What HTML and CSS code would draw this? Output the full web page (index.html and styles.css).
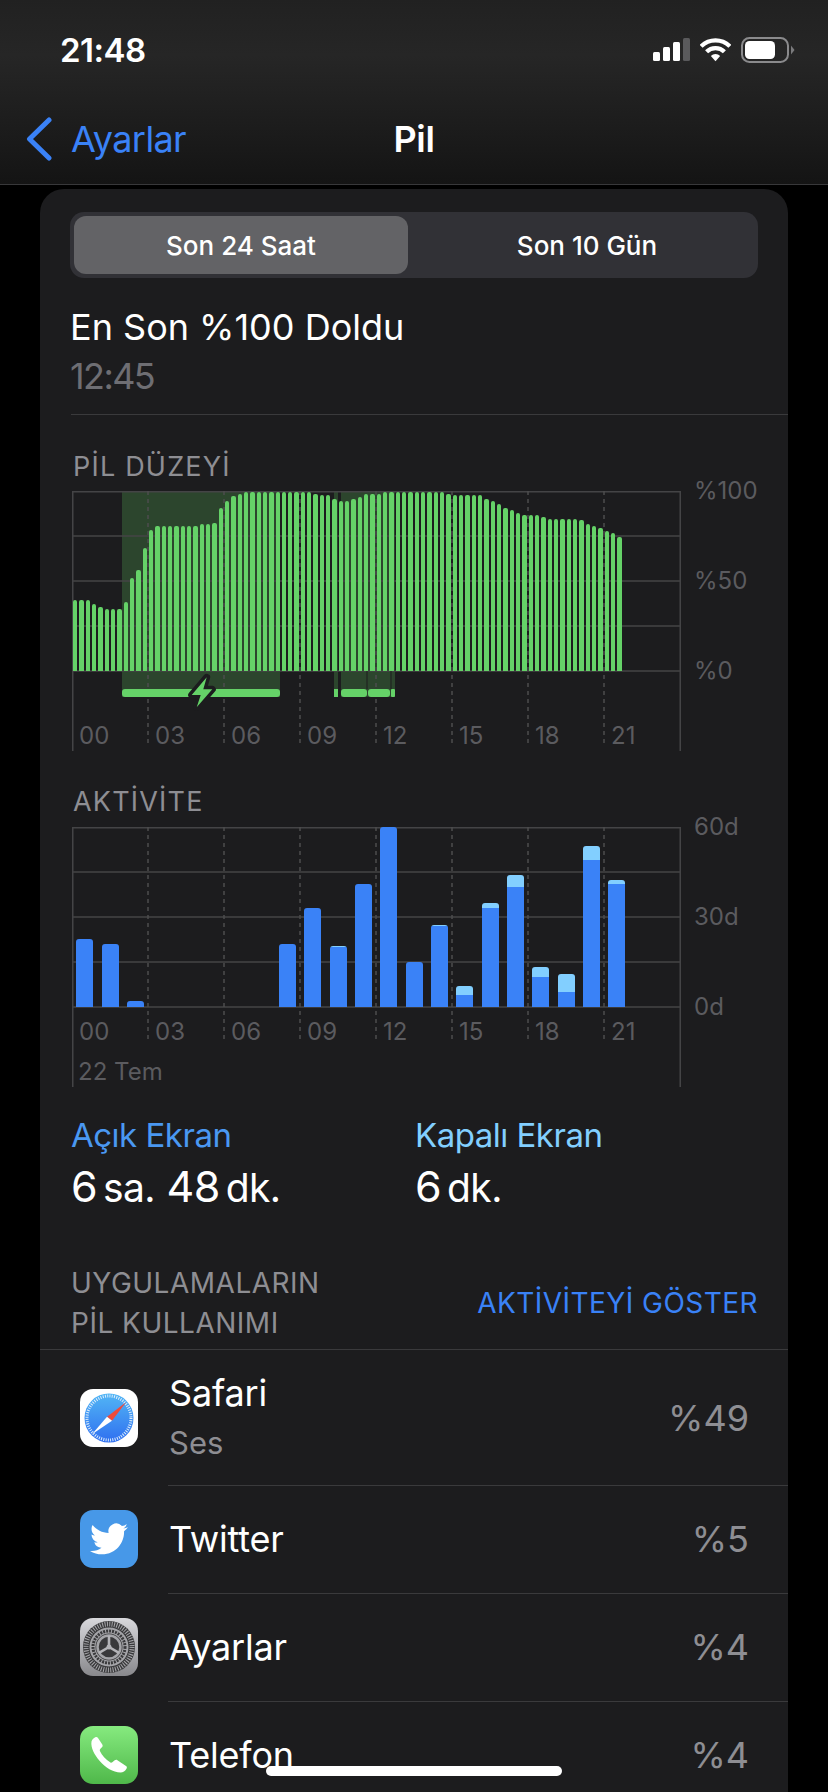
FILE: index.html
```html
<!DOCTYPE html>
<html lang="tr">

<head>
    <meta charset="UTF-8">
    <title>Pil</title>
    <link rel="stylesheet" href="styles.css">
</head>

<body>
    <div class="screen">

        <header class="top">
            <div class="status">
                <span class="time">21:48</span>
                <div class="status-icons">
                    <svg width="37" height="24" viewBox="0 0 37 24">
                        <rect x="0" y="14" width="7" height="9" rx="1.5" fill="#fff" />
                        <rect x="10" y="9" width="7" height="14" rx="1.5" fill="#fff" />
                        <rect x="20" y="4" width="7" height="19" rx="1.5" fill="#fff" />
                        <rect x="30" y="0" width="7" height="23" rx="1.5" fill="#5a5a5c" />
                    </svg>
                    <svg width="31" height="24" viewBox="0 0 32 24" fill="none" stroke="#fff" stroke-width="4.4">
                        <path d="M1.15 8.15A21 21 0 0 1 30.85 8.15" />
                        <path d="M6.8 13.8A13 13 0 0 1 25.2 13.8" />
                        <path d="M16 23.5L11.2 18.2A6.8 6.8 0 0 1 20.8 18.2Z" fill="#fff" stroke="none" />
                    </svg>
                    <svg width="54" height="26" viewBox="0 0 54 26">
                        <rect x="1" y="1" width="46" height="24" rx="7.5" fill="none" stroke="#8a8a8c" stroke-width="2" />
                        <rect x="4" y="4" width="30" height="18" rx="4.5" fill="#fff" />
                        <path d="M50 8.500l3.500 4.500l-3.500 4.500z" fill="#7a7a7c" />
                    </svg>
                </div>
            </div>
            <nav class="nav">
                <a class="back">
                    <svg width="26" height="44" viewBox="0 0 26 44" fill="none" stroke="#3a82f7" stroke-width="5" stroke-linecap="round" stroke-linejoin="round">
                        <path d="M23 3L3.500 22L23 41" />
                    </svg>
                    <span>Ayarlar</span>
                </a>
                <span class="nav-title">Pil</span>
            </nav>
        </header>

        <main class="card">

            <div class="seg">
                <div class="seg-item seg-on">Son 24 Saat</div>
                <div class="seg-item seg-off">Son 10 Gün</div>
            </div>

            <div class="last">
                <div class="last-title">En Son %100 Doldu</div>
                <div class="last-time">12:45</div>
            </div>

            <!-- Pil düzeyi -->
            <h3 class="chart-title">PİL DÜZEYİ</h3>
            <div class="chart-row">
                <div class="chart">
                    <svg class="grid" width="609" height="260" viewBox="0 0 609 260">
                        <rect x="50" y="0" width="158" height="206" fill="#2c452d" />
                        <rect x="262" y="0" width="4" height="206" fill="#2c452d" />
                        <rect x="269" y="0" width="54" height="206" fill="#2c452d" />
                        <path class="line" d="M.75 0V260M608.250 0V260M0 .75H609M0 45H609M0 90H609M0 135H609M0 180H609" />
                        <path class="dash" d="M76 0V255M152 0V255M228 0V255M304 0V255M380 0V255M456 0V255M532 0V255" />
                        <path class="thin" d="M295 180V198M319 180V198" />
                        <rect class="charge" x="50" y="198" width="158" height="8" rx="3" />
                        <rect class="charge" x="262" y="198" width="4" height="8" />
                        <rect class="charge" x="269" y="198" width="26" height="8" rx="3" />
                        <rect class="charge" x="296" y="198" width="22" height="8" rx="3" />
                        <rect class="charge" x="319" y="198" width="4" height="8" rx="1" />
                        <path class="bolt" d="M134.700 186.300L119.700 204H128.700L124.700 216.300L140.300 198.300H131.300Z" />
                    </svg>
                    <div class="plot plot-level">
                        <i style="height:70.7px"></i><i style="height:71.3px"></i><i style="height:71.3px"></i><i style="height:67.3px"></i><i style="height:64px"></i><i style="height:62.3px"></i><i style="height:62px"></i><i style="height:62px"></i><i style="height:69.3px"></i><i style="height:92.7px"></i><i style="height:101.3px"></i><i style="height:123.3px"></i><i style="height:141.3px"></i><i style="height:144.7px"></i>
                        <i style="height:145px"></i><i style="height:145px"></i><i style="height:145px"></i><i style="height:145px"></i><i style="height:145px"></i><i style="height:145px"></i><i style="height:146.7px"></i><i style="height:146.7px"></i><i style="height:148.3px"></i><i style="height:163px"></i><i style="height:170px"></i><i style="height:175.3px"></i><i style="height:177.3px"></i>
                        <i style="height:179px"></i><i style="height:179px"></i><i style="height:179px"></i><i style="height:179px"></i><i style="height:179px"></i><i style="height:179px"></i><i style="height:179px"></i><i style="height:179px"></i><i style="height:179px"></i><i style="height:179px"></i><i style="height:179px"></i>
                        <i style="height:177.3px"></i><i style="height:175.7px"></i><i style="height:175.7px"></i><i style="height:172px"></i><i style="height:170.3px"></i><i style="height:170.3px"></i><i style="height:172px"></i><i style="height:173.7px"></i><i style="height:177.3px"></i><i style="height:177.3px"></i><i style="height:177.3px"></i>
                        <i style="height:179px"></i><i style="height:179px"></i><i style="height:179px"></i><i style="height:179px"></i><i style="height:179px"></i><i style="height:179px"></i><i style="height:179px"></i><i style="height:179px"></i><i style="height:179px"></i><i style="height:179px"></i>
                        <i style="height:177.3px"></i><i style="height:175.7px"></i><i style="height:175.7px"></i><i style="height:175.7px"></i><i style="height:175.7px"></i><i style="height:175.7px"></i><i style="height:172px"></i><i style="height:170.3px"></i><i style="height:166.7px"></i><i style="height:163px"></i><i style="height:161.3px"></i><i style="height:157.7px"></i>
                        <i style="height:155.7px"></i><i style="height:155.7px"></i><i style="height:155.7px"></i><i style="height:154px"></i><i style="height:152.3px"></i><i style="height:152.3px"></i><i style="height:152.3px"></i><i style="height:152.3px"></i><i style="height:152.3px"></i><i style="height:150.7px"></i><i style="height:147px"></i><i style="height:145px"></i><i style="height:143.3px"></i><i style="height:139.7px"></i><i style="height:138px"></i><i style="height:134.3px"></i>
                    </div>
                    <div class="hours hours-far">
                        <span>00</span><span>03</span><span>06</span><span>09</span><span>12</span><span>15</span><span>18</span><span>21</span>
                    </div>
                </div>
                <div class="yaxis">
                    <span>%100</span><span>%50</span><span>%0</span>
                </div>
            </div>

            <!-- Aktivite -->
            <h3 class="chart-title chart-title-2">AKTİVİTE</h3>
            <div class="chart-row">
                <div class="chart">
                    <svg class="grid" width="609" height="260" viewBox="0 0 609 260">
                        <path class="line" d="M.75 0V260M608.250 0V260M0 .75H609M0 45H609M0 90H609M0 135H609M0 180H609" />
                        <path class="dash" d="M76 0V216M152 0V216M228 0V216M304 0V216M380 0V216M456 0V216M532 0V216" />
                    </svg>
                    <div class="plot plot-act">
                        <div class="abar"><b style="height:68.3px"></b></div>
                        <div class="abar"><b style="height:62.7px"></b></div>
                        <div class="abar"><b style="height:5.7px"></b></div>
                        <div class="abar"></div>
                        <div class="abar"></div>
                        <div class="abar"></div>
                        <div class="abar"></div>
                        <div class="abar"></div>
                        <div class="abar"><b style="height:62.7px"></b></div>
                        <div class="abar"><b style="height:98.7px"></b></div>
                        <div class="abar"><u style="height:1px"></u><b style="height:59.7px"></b></div>
                        <div class="abar"><b style="height:122.7px"></b></div>
                        <div class="abar"><b style="height:179.7px"></b></div>
                        <div class="abar"><b style="height:44.7px"></b></div>
                        <div class="abar"><u style="height:1px"></u><b style="height:80.7px"></b></div>
                        <div class="abar"><u style="height:9px"></u><b style="height:11.7px"></b></div>
                        <div class="abar"><u style="height:5px"></u><b style="height:98.7px"></b></div>
                        <div class="abar"><u style="height:12px"></u><b style="height:119.7px"></b></div>
                        <div class="abar"><u style="height:10px"></u><b style="height:29.7px"></b></div>
                        <div class="abar"><u style="height:18px"></u><b style="height:14.7px"></b></div>
                        <div class="abar"><u style="height:14px"></u><b style="height:146.7px"></b></div>
                        <div class="abar"><u style="height:4px"></u><b style="height:122.7px"></b></div>
                    </div>
                    <div class="hours">
                        <span>00</span><span>03</span><span>06</span><span>09</span><span>12</span><span>15</span><span>18</span><span>21</span>
                    </div>
                    <div class="day">22 Tem</div>
                </div>
                <div class="yaxis">
                    <span>60d</span><span>30d</span><span>0d</span>
                </div>
            </div>

            <div class="usage">
                <div class="usage-col">
                    <div class="usage-label">Açık Ekran</div>
                    <div class="usage-val">6<small>sa.</small> 48<small>dk.</small></div>
                </div>
                <div class="usage-col">
                    <div class="usage-label usage-label-off">Kapalı Ekran</div>
                    <div class="usage-val">6<small>dk.</small></div>
                </div>
            </div>

            <div class="apps-head">
                <div class="apps-title">UYGULAMALARIN<br>PİL KULLANIMI</div>
                <a class="apps-link">AKTİVİTEYİ GÖSTER</a>
            </div>

            <ul class="apps">
                <li class="app app-first">
                    <svg class="app-icon" width="58" height="58" viewBox="0 0 58 58">
                        <defs>
                            <linearGradient id="safariBg" x1="0" y1="0" x2="0" y2="1">
                                <stop offset="0" stop-color="#52b6f5" />
                                <stop offset="1" stop-color="#2f6ff0" />
                            </linearGradient>
                        </defs>
                        <rect width="58" height="58" rx="13" fill="#fff" />
                        <circle cx="29" cy="29" r="24.500" fill="url(#safariBg)" />
                        <circle cx="29" cy="29" r="22" fill="none" stroke="#dcedfc" stroke-width="3" stroke-dasharray="1 1.300" />
                        <path d="M46 13.300L27 27.700L32 31.700Z" fill="#ef4b3c" />
                        <path d="M12 45.300L27 27.700L32 31.700Z" fill="#fff" />
                    </svg>
                    <div class="app-text">
                        <div class="app-name">Safari</div>
                        <div class="app-sub">Ses</div>
                    </div>
                    <span class="app-pct">%49</span>
                </li>
                <li class="app">
                    <svg class="app-icon" width="58" height="58" viewBox="0 0 58 58">
                        <rect width="58" height="58" rx="13" fill="#4798e8" />
                        <g transform="translate(10 10) scale(1.580)">
                            <path fill="#fff" d="M23.953 4.570a10 10 0 01-2.825.775 4.958 4.958 0 002.163-2.723c-.951.555-2.005.959-3.127 1.184a4.920 4.920 0 00-8.384 4.482C7.690 8.095 4.067 6.130 1.640 3.162a4.822 4.822 0 00-.666 2.475c0 1.710.870 3.213 2.188 4.096a4.904 4.904 0 01-2.228-.616v.060a4.923 4.923 0 003.946 4.827 4.996 4.996 0 01-2.212.085 4.936 4.936 0 004.604 3.417 9.867 9.867 0 01-6.102 2.105c-.390 0-.779-.023-1.170-.067a13.995 13.995 0 007.557 2.209c9.053 0 13.998-7.496 13.998-13.985 0-.210 0-.420-.015-.630A9.935 9.935 0 0024 4.590z" />
                        </g>
                    </svg>
                    <div class="app-text">
                        <div class="app-name">Twitter</div>
                    </div>
                    <span class="app-pct">%5</span>
                </li>
                <li class="app">
                    <svg class="app-icon" width="58" height="58" viewBox="0 0 58 58">
                        <defs>
                            <linearGradient id="gearBg" x1="0" y1="0" x2="0" y2="1">
                                <stop offset="0" stop-color="#d8d8dc" />
                                <stop offset="1" stop-color="#88888c" />
                            </linearGradient>
                        </defs>
                        <rect width="58" height="58" rx="13" fill="url(#gearBg)" />
                        <circle cx="29" cy="29" r="26" fill="#39393b" />
                        <circle cx="29" cy="29" r="23" fill="none" stroke="#a8a8ac" stroke-width="5" stroke-dasharray="1 1.400" />
                        <circle cx="29" cy="29" r="19.500" fill="#a4a4a8" />
                        <circle cx="29" cy="29" r="16" fill="none" stroke="#39393b" stroke-width="3" stroke-dasharray="2 1" />
                        <circle cx="29" cy="29" r="13.500" fill="#39393b" />
                        <circle cx="29" cy="29" r="11.500" fill="none" stroke="#a4a4a8" stroke-width="2.500" />
                        <path d="M29 29V17.500M29 29L19 34.800M29 29L39 34.800" stroke="#b4b4b8" stroke-width="2.600" fill="none" />
                        <circle cx="29" cy="29" r="2.500" fill="#b4b4b8" />
                    </svg>
                    <div class="app-text">
                        <div class="app-name">Ayarlar</div>
                    </div>
                    <span class="app-pct">%4</span>
                </li>
                <li class="app">
                    <svg class="app-icon" width="58" height="58" viewBox="0 0 58 58">
                        <defs>
                            <linearGradient id="phoneBg" x1="0" y1="0" x2="0" y2="1">
                                <stop offset="0" stop-color="#86ea7f" />
                                <stop offset="1" stop-color="#4fb84a" />
                            </linearGradient>
                        </defs>
                        <rect width="58" height="58" rx="13" fill="url(#phoneBg)" />
                        <path fill="#fff" d="M11.500 15.500C12 13.500 14 11.500 15.800 11C16.800 10.800 17.500 11.200 18 12L22.300 18.500C22.900 19.500 22.700 20.500 21.900 21.300L20.200 23C19.700 23.600 19.600 24.300 19.900 25C22 29.500 25.500 33.500 30.500 36.500C31.100 36.800 31.700 36.700 32.300 36.200L34.700 34.300C35.600 33.700 36.500 33.600 37.400 34.200L46 40C47 40.700 47.100 41.500 46.600 42.400C45.300 44.800 43 46.500 40.500 46.500C33 46.500 25.500 41.800 19.500 34.800C14.500 28.800 10.500 21.500 11.500 15.500Z" />
                    </svg>
                    <div class="app-text">
                        <div class="app-name">Telefon</div>
                    </div>
                    <span class="app-pct">%4</span>
                </li>
            </ul>
        </main>

        <div class="home-bar"></div>
    </div>
</body>

</html>
```

FILE: styles.css
```css
* {
    box-sizing: border-box;
}

html,
body {
    margin: 0;
    padding: 0;
    background: #000;
}

body {
    font-family: Inter, "Liberation Sans", sans-serif;
    color: #fff;
}

.screen {
    position: relative;
    width: 828px;
    height: 1792px;
    overflow: hidden;
    background: #000;
}

/* ust kisim */
.top {
    height: 185px;
    background: linear-gradient(#212121, #262626 30%, #1c1c1c 70%, #141414);
    border-bottom: 1px solid #38383a;
}

.status {
    height: 100px;
    padding: 0 33px 0 60px;
    display: flex;
    align-items: center;
    justify-content: space-between;
}

.time {
    font-size: 33px;
    font-weight: 600;
    letter-spacing: -0.5px;
}

.status-icons {
    display: flex;
    align-items: center;
    gap: 10px;
}

.nav {
    height: 78px;
    display: grid;
    grid-template-columns: 1fr auto 1fr;
    align-items: center;
}

.back {
    display: flex;
    align-items: center;
    gap: 19px;
    padding-left: 26px;
    color: #3a82f7;
    font-size: 36px;
    letter-spacing: -0.6px;
}

.nav-title {
    font-size: 36px;
    font-weight: 600;
    letter-spacing: -0.3px;
}

/* карточка */
.card {
    height: 1700px;
    margin: 4px 40px 0;
    padding-top: 23px;
    background: #1c1c1e;
    border-radius: 24px 24px 0 0;
}

.seg {
    height: 66px;
    margin: 0 30px;
    padding: 4px;
    display: flex;
    background: #313136;
    border-radius: 14px;
}

.seg-item {
    width: 334px;
    height: 58px;
    display: flex;
    align-items: center;
    justify-content: center;
    font-size: 26px;
    font-weight: 500;
    border-radius: 12px;
}

.seg-off {
    flex: 1;
    padding-left: 12px;
}

.seg-on {
    background: #636366;
}

.last {
    margin: 27px 0 0 31px;
    padding-bottom: 16px;
    border-bottom: 1px solid #3a3a3c;
}

.last-title,
.last-time {
    margin-left: -1px;
    font-size: 36px;
    line-height: 44px;
}

.last-title {
    margin-bottom: 5px;
}

.last-time {
    color: #6e6e73;
    letter-spacing: -1.6px;
}

.chart-title {
    margin: 37px 0 9px 33px;
    font-size: 27px;
    line-height: 30px;
    font-weight: 400;
    letter-spacing: 1.2px;
    color: #8e8e93;
}

.chart-title-2 {
    margin-top: 36px;
    margin-bottom: 10px;
}

.chart-row {
    display: flex;
    gap: 13px;
    margin-left: 32px;
}

.chart {
    position: relative;
    width: 609px;
    height: 260px;
}

.grid {
    position: absolute;
    top: 0;
    left: 0;
}

.line {
    fill: none;
    stroke: #444446;
    stroke-width: 1.5;
}

.dash {
    fill: none;
    stroke: #4c4c4e;
    stroke-width: 1.5;
    stroke-dasharray: 4 4;
}

.thin {
    fill: none;
    stroke: #1c1c1e;
    stroke-width: 1;
}

.charge {
    fill: #65d268;
}

.bolt {
    fill: #65d268;
    stroke: #1c1c1e;
    stroke-width: 7;
    stroke-linejoin: round;
    paint-order: stroke;
}

.plot {
    position: relative;
    height: 180px;
    display: flex;
    align-items: flex-end;
}

.plot-level {
    gap: 2px;
    padding-left: 1px;
}

.plot-level i {
    display: block;
    width: 4.33px;
    background: #65d268;
    border-radius: 2px 2px 0 0;
}

.plot-act {
    gap: 8.33px;
    padding-left: 4.3px;
}

.abar {
    width: 17px;
    display: flex;
    flex-direction: column;
    border-radius: 3px 3px 0 0;
    overflow: hidden;
}

.abar b {
    display: block;
    background: #3a82f7;
}

.abar u {
    display: block;
    background: #82cfff;
}

.hours {
    position: relative;
    margin-top: 10px;
    display: grid;
    grid-template-columns: repeat(8, 76px);
    font-size: 24px;
    line-height: 30px;
    color: #5b5b5f;
}

.hours span {
    padding-left: 7px;
}

.hours-far {
    margin-top: 50px;
}

.day {
    position: relative;
    margin: 10px 0 0 6px;
    font-size: 24px;
    line-height: 30px;
    color: #5b5b5f;
}

.yaxis {
    height: 206px;
    margin-top: -13px;
    display: flex;
    flex-direction: column;
    justify-content: space-between;
    font-size: 24px;
    line-height: 26px;
    color: #5b5b5f;
}

.usage {
    margin: 28px 0 0 31px;
    display: flex;
}

.usage-col {
    width: 344px;
}

.usage-label {
    font-size: 33px;
    line-height: 40px;
    color: #4a98f2;
    letter-spacing: -0.5px;
}

.usage-label-off {
    color: #82cfff;
}

.usage-val {
    margin-top: 6px;
    margin-bottom: 1px;
    font-size: 43px;
    line-height: 50px;
    letter-spacing: -0.6px;
}

.usage-val small {
    margin-left: 6px;
    font-size: 39px;
}

.apps-head {
    margin: 49px 30px 6px 31px;
    display: flex;
    align-items: center;
    justify-content: space-between;
}

.apps-title {
    font-size: 28px;
    line-height: 40px;
    letter-spacing: 0.5px;
    color: #8e8e93;
}

.apps-link {
    font-size: 28px;
    letter-spacing: 0.45px;
    color: #3a82f7;
}

.apps {
    list-style: none;
    margin: 0;
    padding: 0;
    border-top: 1px solid #3a3a3c;
}

.app {
    position: relative;
    height: 108px;
    padding: 0 39px 0 40px;
    display: flex;
    align-items: center;
}

.app-first {
    height: 135px;
}

.app+.app::before {
    content: "";
    position: absolute;
    top: 0;
    left: 128px;
    right: 0;
    border-top: 1px solid #3a3a3c;
}

.app-icon {
    flex: none;
}

.app-text {
    flex: 1;
    margin-left: 31px;
}

.app-name {
    font-size: 36px;
    line-height: 46px;
    letter-spacing: -0.2px;
}

.app-sub {
    margin-top: 7px;
    margin-bottom: 3px;
    font-size: 31px;
    line-height: 40px;
    color: #8e8e93;
}

.app-pct {
    font-size: 36px;
    color: #8e8e93;
}

.home-bar {
    position: absolute;
    left: 266px;
    top: 1766px;
    width: 296px;
    height: 10px;
    background: #fff;
    border-radius: 5px;
}
```
